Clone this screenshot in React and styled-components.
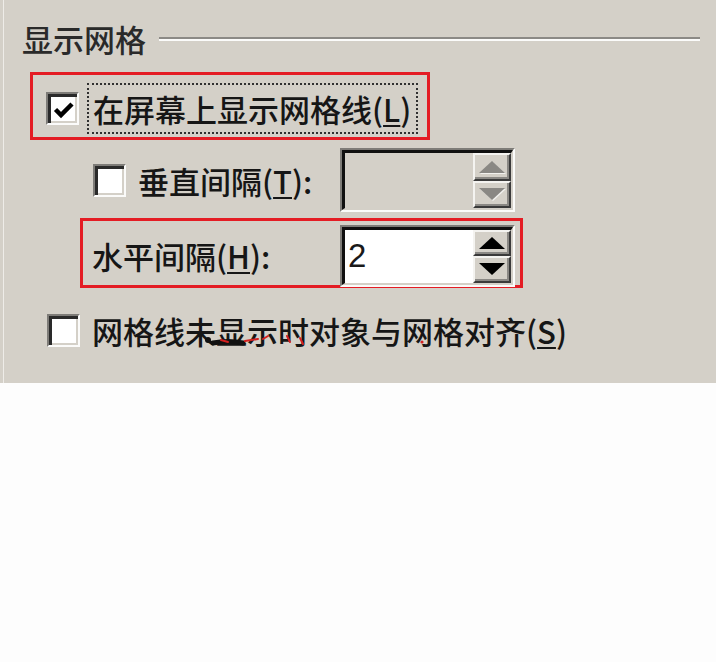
import React from "react";
import styled, { createGlobalStyle } from "styled-components";

const Global = createGlobalStyle`
  html, body { margin: 0; padding: 0; background: #fdfdfd; }
  body { font-family: "Noto Sans CJK SC", "Noto Sans", sans-serif; }
`;

const Panel = styled.div`
  position: relative;
  width: 716px;
  height: 383px;
  box-sizing: border-box;
  background: #d4d0c8;
  box-shadow: inset 3px 0 0 #d4d0c8, inset 4px 0 0 #eeece8;
  display: flex;
  flex-direction: column;
  padding-top: 20px;
  color: #161616;
  font-size: 31px;
  font-weight: 500;
`;

const TitleRow = styled.div`
  display: flex;
  align-items: center;
  height: 37px;
  margin-left: 22px;
  margin-right: 16px;
`;

const Title = styled.span`
  line-height: 37px;
  white-space: nowrap;
  color: #2a2a2a;
`;

const Rule = styled.div`
  flex: 1;
  margin-left: 13px;
  height: 0;
  border-top: 2px solid #8c8a86;
  border-bottom: 2px solid #fbfbfa;
`;

const RedBox = styled.div`
  box-sizing: border-box;
  display: flex;
  align-items: center;
  margin-top: ${(p) => p.$top}px;
  margin-left: ${(p) => p.$left}px;
  width: ${(p) => p.$width}px;
  height: ${(p) => p.$height}px;
  border: 3px solid #e41c24;
  padding: ${(p) => p.$pad};
`;

const Row = styled.div`
  display: flex;
  align-items: center;
  margin-top: ${(p) => p.$top}px;
  margin-left: ${(p) => p.$left}px;
  height: ${(p) => p.$height}px;
`;

const Box = styled.div`
  box-sizing: border-box;
  width: 33px;
  height: 33px;
  flex: none;
  background: #fff;
  border-style: solid;
  border-width: 2px;
  border-color: #7e7c78 #fbfbfa #fbfbfa #7e7c78;
  box-shadow: inset 3px 3px 0 #2a2a2a, inset -2px -2px 0 #d4d0c8;
  display: flex;
  align-items: center;
  justify-content: center;
`;

const Focus = styled.div`
  box-sizing: border-box;
  margin-left: 8px;
  height: 51px;
  border: 2px dotted #303030;
  padding: 0 5px 0 4px;
  display: flex;
  align-items: center;
`;

const Label = styled.span`
  display: inline-block;
  line-height: 47px;
  white-space: nowrap;
  margin-left: ${(p) => p.$gap || 0}px;
  width: ${(p) => (p.$width ? `${p.$width}px` : "auto")};
  flex: none;
`;

const U = styled.span`
  text-decoration: underline;
  text-decoration-thickness: 2px;
  text-underline-offset: 3px;
`;

const SpinOuter = styled.div`
  box-sizing: border-box;
  width: 175px;
  height: ${(p) => p.$height}px;
  flex: none;
  border-style: solid;
  border-width: 2px;
  border-color: #7e7c78 #fbfbfa #fbfbfa #7e7c78;
`;

const SpinInner = styled.div`
  box-sizing: border-box;
  height: 100%;
  display: flex;
  border-style: solid;
  border-width: 3px 2px 2px 3px;
  border-color: #101010 #d4d0c8 #d4d0c8 #101010;
  background: ${(p) => (p.$disabled ? "#d4d0c8" : "#fff")};
`;

const SpinValue = styled.div`
  flex: 1;
  display: flex;
  align-items: center;
  padding-left: 3px;
  font-family: "Liberation Sans", "Noto Sans", sans-serif;
  font-weight: 400;
  font-size: 33px;
  color: #1a1a1a;
`;

const SpinButtons = styled.div`
  width: 38px;
  flex: none;
  display: flex;
  flex-direction: column;
`;

const SpinButton = styled.div`
  box-sizing: border-box;
  flex: 1;
  background: #d4d0c8;
  border-style: solid;
  border-width: 2px;
  border-color: #f4f3f0 #3a3a3a #3a3a3a #f4f3f0;
  box-shadow: inset -2px -2px 0 #8a8884;
  display: flex;
  align-items: center;
  justify-content: center;
`;

const Overlay = styled.svg`
  position: absolute;
  left: 0;
  top: 0;
  pointer-events: none;
`;

function Check({ checked }) {
  return (
    <Box>
      {checked && (
        <svg width="24" height="24" viewBox="0 0 24 24">
          <path d="M4.5 13.5 L10 19 L21 8" fill="none" stroke="#000" strokeWidth="4.5" />
        </svg>
      )}
    </Box>
  );
}

function Arrow({ up, disabled }) {
  const fill = disabled ? "#8a8884" : "#000";
  const pts = up ? "1,13 14,1 27,13" : "1,1 14,13 27,1";
  return (
    <svg width="28" height="14" viewBox="0 0 28 14">
      {disabled && <polygon points={pts} fill="#f2f1ee" transform="translate(1,1)" />}
      <polygon points={pts} fill={fill} />
    </svg>
  );
}

function Spinner({ value, disabled, height }) {
  return (
    <SpinOuter $height={height}>
      <SpinInner $disabled={disabled}>
        <SpinValue>{value}</SpinValue>
        <SpinButtons>
          <SpinButton>
            <Arrow up disabled={disabled} />
          </SpinButton>
          <SpinButton>
            <Arrow disabled={disabled} />
          </SpinButton>
        </SpinButtons>
      </SpinInner>
    </SpinOuter>
  );
}

export default function App() {
  return (
    <>
      <Global />
      <Panel>
        <TitleRow>
          <Title>显示网格</Title>
          <Rule />
        </TitleRow>

        <RedBox $top={15} $left={30} $width={400} $height={68} $pad="4px 0 0 13px">
          <Check checked />
          <Focus>
            <Label>
              在屏幕上显示网格线(<U>L</U>)
            </Label>
          </Focus>
        </RedBox>

        <Row $top={8} $left={93} $height={64}>
          <Check />
          <Label $gap={12} $width={202}>
            垂直间隔(<U>T</U>):
          </Label>
          <Spinner disabled height={64} />
        </Row>

        <RedBox $top={6} $left={80} $width={443} $height={70} $pad="5px 5px 0 9px">
          <Label $width={248}>
            水平间隔(<U>H</U>):
          </Label>
          <Spinner value="2" height={62} />
        </RedBox>

        <Row $top={22} $left={47} $height={40}>
          <Check />
          <Label $gap={12}>
            网格线未显示时对象与网格对齐(<U>S</U>)
          </Label>
        </Row>

        <Overlay width="716" height="383" viewBox="0 0 716 383">
          <circle cx="208" cy="340" r="3" fill="#111" />
          <path d="M213 343 Q228 340 243 343" stroke="#111" strokeWidth="5" fill="none" strokeLinecap="round" />
          <g stroke="#d42020" strokeWidth="2" fill="none" strokeLinecap="round">
            <path d="M221 340 L228 342" />
            <path d="M245 341 L258 339" />
            <path d="M263 339 L268 336" />
            <path d="M287 336 L290 342" />
            <path d="M300 338 L303 344" />
          </g>
          <circle cx="422" cy="342" r="1.6" fill="#d42020" />
        </Overlay>
      </Panel>
    </>
  );
}
